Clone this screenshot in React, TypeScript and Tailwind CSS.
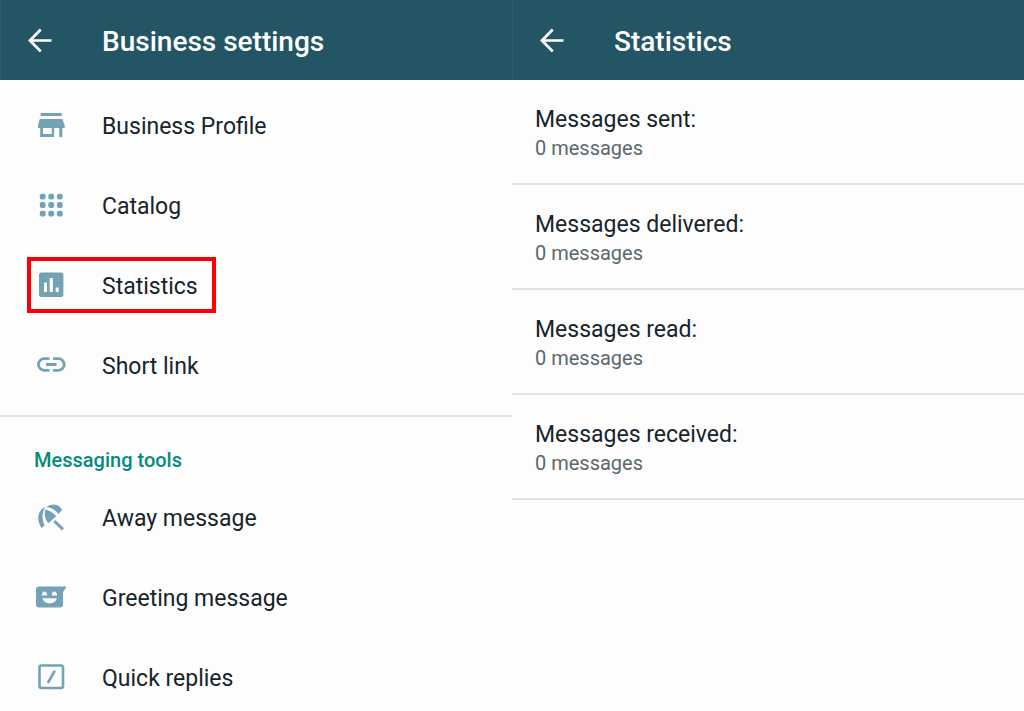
import type { ReactNode } from "react";

function Icon({ children }: { children: ReactNode }) {
  return (
    <svg viewBox="0 0 32 32" className="size-8 shrink-0 fill-[#72a2b4]" aria-hidden="true">
      {children}
    </svg>
  );
}

const stroke = "fill-none stroke-[#72a2b4]";

const StoreIcon = (
  <Icon>
    <path d="M5.7 4h21v3h-21zM4.8 10h22.6l2.3 6.5V19h-2.4v9h-3v-9h-5.2v9H5.2v-9H3v-2.5zM8 19v6h8.8v-6z" fillRule="evenodd" />
  </Icon>
);

const CatalogIcon = (
  <Icon>
    {[7.6, 16, 24.6].map((y) =>
      [7.7, 16.2, 24.8].map((x) => (
        <rect key={`${x}-${y}`} x={x - 2.9} y={y - 2.9} width="5.8" height="5.8" rx="2" />
      )),
    )}
  </Icon>
);

const StatisticsIcon = (
  <Icon>
    <path
      fillRule="evenodd"
      d="M6.5 3.5h19.4a2.5 2.5 0 0 1 2.5 2.5v19.5a2.5 2.5 0 0 1-2.5 2.5H6.5A2.5 2.5 0 0 1 4 25.5V6a2.5 2.5 0 0 1 2.5-2.5zM9 13.5V23h3v-9.500zM14.700 9v14h3.200V9zM20.700 18.500V23h3v-4.500z"
    />
  </Icon>
);

const LinkIcon = (
  <Icon>
    <path
      className={stroke}
      strokeWidth="2.8"
      d="M14.5 9.700H9.200a5.700 5.700 0 0 0 0 11.600h5.300M18 9.700h5.400a5.700 5.700 0 0 1 0 11.600H18M11 15.500h10.500"
    />
  </Icon>
);

const AwayIcon = (
  <Icon>
    <path d="M10.3 6C6 8 3.300 11.500 3.200 16.500c0 4 1.400 7.500 3.500 10.500l2.900-2.500C7 19 6.300 12.500 10.300 6z" />
    <path d="M10.200 8.500C9 13.500 10.200 18.500 13.300 22.300L21.200 15.200C18 11.800 14.500 9.300 10.200 8.500z" />
    <path d="M11.500 6C15.500 3.200 19 3.200 21.500 4c2.700.9 4.300 2.700 5.500 4.800L23.700 13C20.500 9.500 17 6.700 11.500 6z" />
    <path className={stroke} strokeWidth="3" d="m19.300 20 8.700 8.300" />
  </Icon>
);

const GreetingIcon = (
  <Icon>
    <path
      fillRule="evenodd"
      d="M4 5.500h26.700c.6 0 .7.500.4.900L28 11v12.500a3 3 0 0 1-3 3H4a3 3 0 0 1-3-3v-15a3 3 0 0 1 3-3zM6.800 14.500h5.400c0-5.400-5.400-5.400-5.400 0zm9.900 0h5.400c0-5.400-5.400-5.400-5.400 0zM7.500 17.300c.8 6.700 13.400 6.700 14.200 0z"
    />
  </Icon>
);

const QuickIcon = (
  <Icon>
    <rect className={stroke} strokeWidth="2.6" x="4.500" y="4.500" width="23.500" height="22.500" rx="2" />
    <path className={stroke} strokeWidth="2.6" strokeLinecap="round" d="m13.300 21.200 6-10.500" />
  </Icon>
);

type Item = { label: string; icon: ReactNode; highlighted?: boolean };

const businessItems: Item[] = [
  { label: "Business Profile", icon: StoreIcon },
  { label: "Catalog", icon: CatalogIcon },
  { label: "Statistics", icon: StatisticsIcon, highlighted: true },
  { label: "Short link", icon: LinkIcon },
];

const messagingItems: Item[] = [
  { label: "Away message", icon: AwayIcon },
  { label: "Greeting message", icon: GreetingIcon },
  { label: "Quick replies", icon: QuickIcon },
];

const statistics = [
  { label: "Messages sent:", value: "0 messages" },
  { label: "Messages delivered:", value: "0 messages" },
  { label: "Messages read:", value: "0 messages" },
  { label: "Messages received:", value: "0 messages" },
];

function TopBar({ title }: { title: string }) {
  return (
    <header className="flex h-20 items-center gap-[50px] border-l border-[#2f6070] bg-[#245565] pl-[27px] text-white">
      <button type="button" aria-label="Back" className="size-6">
        <svg viewBox="0 0 24 24" className="size-6 fill-none stroke-white" strokeWidth="2.7" aria-hidden="true">
          <path d="M23.500 12.500H2M12.700 1.500 2 12.500l10.700 11" />
        </svg>
      </button>
      <h1 className="pt-1 text-[28px] leading-8 font-medium">{title}</h1>
    </header>
  );
}

function Menu({ items }: { items: Item[] }) {
  return (
    <ul>
      {items.map((item) => (
        <li key={item.label} className="relative">
          <button type="button" className="flex h-20 w-full items-center gap-[35px] pl-[35px] text-left text-[23px]">
            {item.icon}
            <span className="pt-1">{item.label}</span>
          </button>
          {item.highlighted && (
            <span className="pointer-events-none absolute inset-y-3 left-[27px] w-[189px] border-4 border-[#fe0000]" />
          )}
        </li>
      ))}
    </ul>
  );
}

export default function App() {
  return (
    <main className="grid min-h-screen grid-cols-2 bg-[#fdfdfd] font-[Roboto,sans-serif] text-[#17242b]">
      <section>
        <TopBar title="Business settings" />
        <div className="border-b-2 border-[#e6e6e6] pt-[5px] pb-2.5">
          <Menu items={businessItems} />
        </div>
        <h2 className="pt-[31px] pl-[34px] text-xl leading-6 font-medium text-[#068a7c]">Messaging tools</h2>
        <div className="pt-[5px]">
          <Menu items={messagingItems} />
        </div>
      </section>
      <section>
        <TopBar title="Statistics" />
        <dl>
          {statistics.map((entry) => (
            <div key={entry.label} className="h-[105px] border-b-2 border-[#e2e2e2] pt-6 pl-[23px]">
              <dt className="text-[23px] leading-8">{entry.label}</dt>
              <dd className="text-xl leading-6 text-[#5b686e]">{entry.value}</dd>
            </div>
          ))}
        </dl>
      </section>
    </main>
  );
}
